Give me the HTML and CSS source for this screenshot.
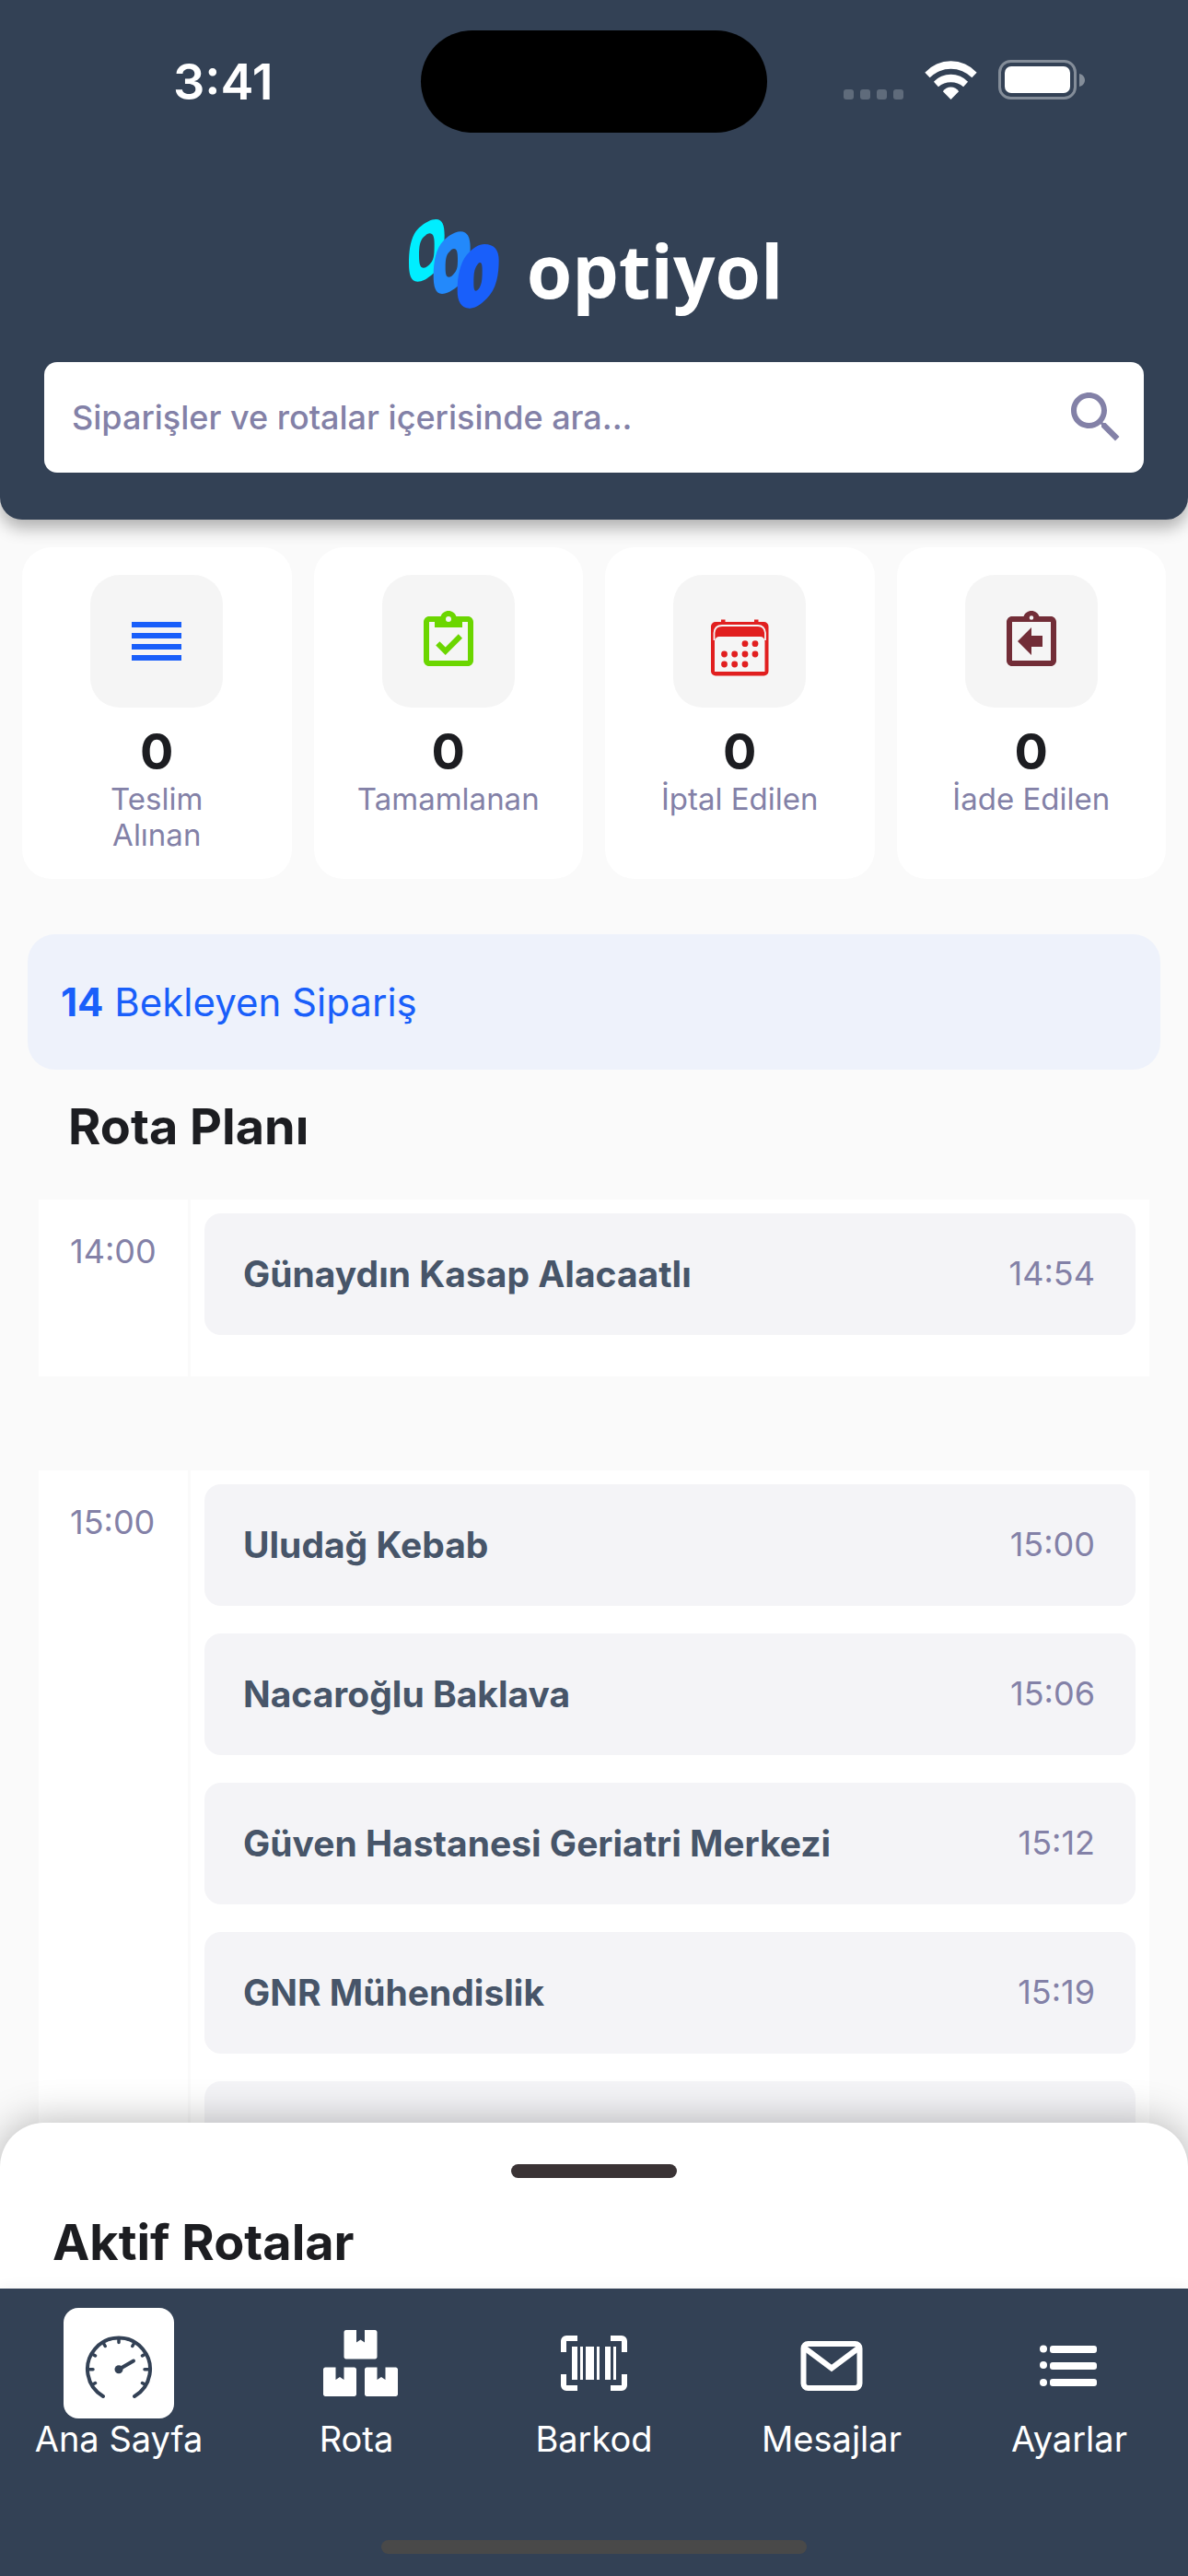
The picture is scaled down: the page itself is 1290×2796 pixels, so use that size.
FILE: index.html
```html
<!DOCTYPE html>
<html lang="tr">
  <head>
    <meta charset="UTF-8" />
    <meta name="viewport" content="width=device-width, initial-scale=1.0" />
    <title>optiyol - Ana Sayfa</title>
    <link rel="stylesheet" href="styles.css">
  </head>
  <body>
    <header class="header">
      <div class="statusBar">
        <span class="clock">3:41</span>
        <div class="island"></div>
        <div class="indicators">
          <svg width="65" height="11" fill="#5f6b7b">
            <rect width="11" height="11" rx="3" />
            <rect x="18" width="11" height="11" rx="3" />
            <rect x="36" width="11" height="11" rx="3" />
            <rect x="54" width="11" height="11" rx="3" />
          </svg>
          <svg width="57" height="42" viewBox="0 0 172 126" fill="#fff">
            <path d="M1 38A115 115 0 0 1 171 38L155 55A97 97 0 0 0 17 55Z" />
            <path d="M30 68A77 77 0 0 1 142 68L127 85A64 64 0 0 0 45 85Z" />
            <path d="M60 100A31 31 0 0 1 112 100L86 126Z" />
          </svg>
          <svg width="94" height="43">
            <rect x="1.5" y="1.5" width="82" height="40" rx="12" fill="none" stroke="#848d99" stroke-width="3" />
            <rect x="7" y="7" width="71" height="29" rx="7" fill="#fff" />
            <path d="M88 15c4 1 6 4 6 7s-2 6-6 7z" fill="#848d99" />
          </svg>
        </div>
      </div>
      <div class="brand">
        <svg width="98" height="97" viewBox="72 52 294 291" fill-rule="evenodd">
          <path fill="#00eeff" d="M160 52C182 52 188 72 188 105C188 150 178 205 152 228C130 247 115 255 100 255C78 255 72 230 72 195C72 150 78 105 105 80C125 62 145 52 160 52ZM140 98C152 98 155 112 155 132C155 165 154 180 145 192C135 204 128 210 118 210C108 210 105 195 105 170C105 140 108 122 120 110C127 103 133 98 140 98Z" />
          <path fill="#2389fb" d="M240 92C264 92 272 112 272 145C272 190 262 243 236 266C214 285 196 295 180 295C158 295 152 270 152 235C152 190 160 145 186 120C205 102 225 92 240 92ZM219 148C229 148 231 162 231 180C231 205 230 214 222 225C214 236 208 240 202 240C193 240 191 228 191 210C191 185 193 170 202 160C208 153 213 148 219 148Z" />
          <path fill="#195ffa" d="M318 133C350 133 365 152 365 185C365 230 358 280 325 311C308 328 290 342 272 342C242 342 230 318 230 285C230 238 238 195 262 166C280 145 300 133 318 133ZM304 193C310 193 311 205 311 220C311 240 310 256 306 266C302 278 295 285 290 285C284 285 283 274 283 258C283 236 284 220 290 208C295 199 299 193 304 193Z" />
        </svg>
        <span class="brandName">optiyol</span>
      </div>
      <form class="search">
        <input type="text" name="search" id="search" aria-label="Ara" placeholder="Siparişler ve rotalar içerisinde ara..." />
        <button type="button" aria-label="Ara">
          <svg width="72" height="72" viewBox="0 0 24 24" fill="#8381a7">
            <path d="M15.5 14h-.79l-.28-.27C15.41 12.59 16 11.11 16 9.5 16 5.91 13.09 3 9.5 3S3 5.91 3 9.5 5.91 16 9.5 16c1.61 0 3.09-.59 4.23-1.57l.27.28v.79l5 4.99L20.49 19l-4.99-5zm-6 0C7.01 14 5 11.99 5 9.5S7.01 5 9.5 5 14 7.01 14 9.5 11.99 14 9.5 14z" />
          </svg>
        </button>
      </form>
    </header>

    <main class="content">
      <section class="stats">
        <div class="stat">
          <div class="statIcon">
            <svg viewBox="0 0 24 24" fill="#195ffa">
              <path d="M3 5h18v2H3zM3 9h18v2H3zM3 13h18v2H3zM3 17h18v2H3z" />
            </svg>
          </div>
          <strong>0</strong>
          <span>Teslim Alınan</span>
        </div>
        <div class="stat">
          <div class="statIcon">
            <svg viewBox="0 0 24 24" fill="#6bd600" fill-rule="evenodd">
              <path d="M19 3h-4.180C14.400 1.840 13.300 1 12 1s-2.400.840-2.820 2H5c-1.100 0-2 .900-2 2v14c0 1.100.900 2 2 2h14c1.100 0 2-.900 2-2V5c0-1.100-.900-2-2-2zM12 3a1 1 0 1 1 0 2 1 1 0 0 1 0-2zM19 19H5V5h2v2h10V5h2z" />
              <path d="M8.800 12.100L10.900 14.200L15.600 9.400L17 10.900L10.900 17L7.400 13.500Z" />
            </svg>
          </div>
          <strong>0</strong>
          <span>Tamamlanan</span>
        </div>
        <div class="stat">
          <div class="statIcon">
            <svg viewBox="0 0 72 72" fill="#e11f1f">
              <path fill-rule="evenodd" d="M10 15h52.500a5 5 0 0 1 5 5v48.500a5 5 0 0 1-5 5H10a5 5 0 0 1-5-5V20a5 5 0 0 1 5-5zM14 31a5 5 0 0 0-5 5v33h54.500V36a5 5 0 0 0-5-5z" />
              <path d="M16 12.500h4.500V16H16zM52 12.500h4.500V16H52z" />
              <path d="M8.500 35V27Q9 19 17 19H56Q63 19 64 27V35" fill="none" stroke="#f5f5f5" stroke-width="1.800" />
              <circle cx="42" cy="38.700" r="3.400" />
              <circle cx="53" cy="38.700" r="3.400" />
              <circle cx="19.500" cy="50" r="3.400" />
              <circle cx="30.700" cy="50" r="3.400" />
              <circle cx="42" cy="50" r="3.400" />
              <circle cx="53" cy="50" r="3.400" />
              <circle cx="19.500" cy="61" r="3.400" />
              <circle cx="30.700" cy="61" r="3.400" />
              <circle cx="42" cy="61" r="3.400" />
            </svg>
          </div>
          <strong>0</strong>
          <span>İptal Edilen</span>
        </div>
        <div class="stat">
          <div class="statIcon">
            <svg viewBox="0 0 24 24" fill="#722d37" fill-rule="evenodd">
              <path d="M19 3h-4.180C14.400 1.840 13.300 1 12 1s-2.400.840-2.820 2H5c-1.100 0-2 .900-2 2v14c0 1.100.900 2 2 2h14c1.100 0 2-.900 2-2V5c0-1.100-.900-2-2-2zM12 2.750a.750.750 0 1 1 0 1.500.750.750 0 0 1 0-1.500zM19 19H5V5h14z" />
              <path d="M12 17l-5-5 5-5v3h4v4h-4z" />
            </svg>
          </div>
          <strong>0</strong>
          <span>İade Edilen</span>
        </div>
      </section>

      <div class="pending"><b>14</b> Bekleyen Sipariş</div>

      <h2 class="planTitle">Rota Planı</h2>
      <section class="slot">
        <div class="slotHour">14:00</div>
        <div class="slotStops">
          <div class="stop"><b>Günaydın Kasap Alacaatlı</b><span>14:54</span></div>
        </div>
      </section>
      <section class="slot">
        <div class="slotHour">15:00</div>
        <div class="slotStops">
          <div class="stop"><b>Uludağ Kebab</b><span>15:00</span></div>
          <div class="stop"><b>Nacaroğlu Baklava</b><span>15:06</span></div>
          <div class="stop"><b>Güven Hastanesi Geriatri Merkezi</b><span>15:12</span></div>
          <div class="stop"><b>GNR Mühendislik</b><span>15:19</span></div>
          <div class="stop"></div>
        </div>
      </section>
    </main>

    <section class="sheet">
      <div class="handle"></div>
      <h2>Aktif Rotalar</h2>
    </section>

    <footer class="bottom">
      <nav class="tabs">
        <a href="#" class="tab active">
          <span class="tabIcon">
            <svg viewBox="0 0 72 72" fill="none" stroke="#334155" stroke-width="4" stroke-linecap="round">
              <path d="M19 72A34 34 0 1 1 53 72" />
              <path stroke-width="3.500" d="M36 9.500v4M19.200 14l2 3.500M52.800 14l-2 3.500M7 26l3.500 2M65 26l-3.500 2M3 42.700h5M69 42.700h-5M7 59.500l3.500-2M65 59.500l-3.500-2" />
              <path d="M36 42.700L52 33.500" />
              <circle cx="36" cy="42.700" r="4.500" fill="#334155" stroke="none" />
            </svg>
          </span>
          Ana Sayfa
        </a>
        <a href="#" class="tab">
          <span class="tabIcon">
            <svg viewBox="0 0 512 512" fill="#fff">
              <path d="M560 288h-80v96l-32-21.300-32 21.300v-96h-80c-8.800 0-16 7.200-16 16v192c0 8.800 7.200 16 16 16h224c8.800 0 16-7.200 16-16V304c0-8.800-7.200-16-16-16zm-384-64h224c8.800 0 16-7.200 16-16V16c0-8.800-7.200-16-16-16h-80v96l-32-21.300L256 96V0h-80c-8.800 0-16 7.200-16 16v192c0 8.800 7.200 16 16 16zm64 64h-80v96l-32-21.300L96 384v-96H16c-8.800 0-16 7.200-16 16v192c0 8.800 7.200 16 16 16h224c8.800 0 16-7.200 16-16V304c0-8.800-7.200-16-16-16z" />
            </svg>
          </span>
          Rota
        </a>
        <a href="#" class="tab">
          <span class="tabIcon">
            <svg viewBox="0 0 72 72" fill="#fff">
              <path d="M3 24V12a3 3 0 0 1 3-3H18M54 9H66a3 3 0 0 1 3 3V24M69 48V60a3 3 0 0 1-3 3H54M18 63H6a3 3 0 0 1-3-3V48" fill="none" stroke="#fff" stroke-width="6" />
              <path d="M12 18h6v36h-6zM21 18h3v36h-3zM27 18h9v36h-9zM39 18h3v36h-3zM48 18h6v36h-6zM57 18h3v36h-3z" />
            </svg>
          </span>
          Barkod
        </a>
        <a href="#" class="tab">
          <span class="tabIcon">
            <svg viewBox="0 0 72 72" fill="none" stroke="#fff" stroke-width="6">
              <rect x="5.500" y="15" width="61" height="48" rx="5" />
              <path d="M6 19L36 41.500L66 19" />
            </svg>
          </span>
          Mesajlar
        </a>
        <a href="#" class="tab">
          <span class="tabIcon">
            <svg viewBox="0 0 72 72" fill="#fff">
              <circle cx="8" cy="20.500" r="4" />
              <circle cx="8" cy="38" r="4" />
              <circle cx="8" cy="57" r="4" />
              <rect x="15" y="17" width="51" height="8" rx="3" />
              <rect x="15" y="35" width="51" height="8" rx="3" />
              <rect x="15" y="53" width="51" height="8" rx="3" />
            </svg>
          </span>
          Ayarlar
        </a>
      </nav>
      <div class="homeBar"></div>
    </footer>
  </body>
</html>
```

FILE: styles.css
```css
* {
  box-sizing: border-box;
}
body {
  margin: 0;
  height: 100vh;
  display: flex;
  flex-direction: column;
  overflow: hidden;
  background-color: #fafafa;
  color: #1c1d21;
  font-family: "Inter", "Liberation Sans", sans-serif;
}
svg {
  display: block;
  overflow: visible;
}
h2 {
  margin: 0;
  font-weight: 700;
  font-size: 54px;
  line-height: 64px;
}

/* header */
.header {
  position: relative;
  z-index: 1;
  flex-shrink: 0;
  padding: 33px 48px 51px;
  background-color: #334155;
  border-radius: 0 0 24px 24px;
  box-shadow: 0 9px 18px rgba(0, 0, 0, 0.3);
}
.statusBar {
  display: grid;
  grid-template-columns: 1fr auto 1fr;
  align-items: center;
}
.clock {
  padding-left: 140px;
  color: white;
  font-size: 54px;
  font-weight: 600;
}
.island {
  width: 376px;
  height: 111px;
  border-radius: 56px;
  background-color: black;
}
.indicators {
  display: flex;
  justify-content: flex-end;
  align-items: flex-end;
  gap: 23px;
  padding: 0 64px 4px 0;
}
.brand {
  display: flex;
  justify-content: center;
  gap: 30px;
  margin: 94px 0 58px;
  padding-left: 4px;
}
.brandName {
  padding-top: 12px;
  color: white;
  font-family: "Open Sans", sans-serif;
  font-size: 80px;
  font-weight: 700;
  line-height: 85px;
}
.search {
  display: flex;
  align-items: center;
  height: 120px;
  padding: 0 16px 0 30px;
  border-radius: 14px;
  background-color: white;
}
.search input {
  flex-grow: 1;
  min-width: 0;
  padding: 0;
  border: none;
  outline: none;
  background: none;
  font-family: inherit;
  font-size: 36px;
  font-weight: 500;
}
.search input::placeholder {
  color: #8381a7;
  opacity: 1;
}
.search button {
  padding: 0;
  border: none;
  background: none;
}

/* dashboard */
.content {
  flex: 1;
  min-height: 0;
  overflow: hidden;
}
.stats {
  display: grid;
  grid-template-columns: repeat(4, 1fr);
  gap: 24px;
  padding: 30px 24px 0;
}
.stat {
  display: flex;
  flex-direction: column;
  align-items: center;
  min-height: 360px;
  padding: 30px 46px 26px;
  border-radius: 32px;
  background-color: white;
  text-align: center;
}
.statIcon {
  display: flex;
  align-items: center;
  justify-content: center;
  width: 144px;
  height: 144px;
  margin-bottom: 18px;
  border-radius: 32px;
  background-color: #f5f5f5;
}
.statIcon svg,
.tabIcon svg {
  width: 72px;
  height: 72px;
}
.stat strong {
  font-size: 54px;
  font-weight: 700;
  line-height: 60px;
}
.stat span {
  margin-top: 2px;
  color: #8381a7;
  font-size: 33px;
  line-height: 39px;
}
.pending {
  margin: 60px 30px 30px;
  padding: 0 36px;
  border-radius: 30px;
  background-color: #eef2fb;
  color: #195ffa;
  font-size: 42px;
  line-height: 147px;
}
.planTitle {
  margin: 0 74px 47px;
}

/* route plan */
.slot {
  display: flex;
  margin: 0 42px 102px;
}
.slotHour {
  width: 162px;
  padding: 34px 0 0 34px;
  background-color: white;
  color: #8381a7;
  font-size: 36px;
  line-height: 44px;
}
.slotStops {
  flex: 1;
  display: flex;
  flex-direction: column;
  gap: 30px;
  margin-left: 3px;
  padding: 15px 15px 45px;
  background-color: white;
}
.stop {
  display: flex;
  align-items: center;
  justify-content: space-between;
  height: 132px;
  padding: 0 44px 2px 42px;
  border-radius: 18px;
  background-color: #f4f4f7;
}
.stop b {
  color: #475569;
  font-size: 39px;
  font-weight: 700;
}
.stop span {
  color: #8381a7;
  font-size: 36px;
}

/* active routes sheet, slides over the plan */
.sheet {
  position: relative;
  flex-shrink: 0;
  margin-top: -48px;
  padding: 45px 57px 18px;
  border-radius: 48px 48px 0 0;
  background-color: white;
  box-shadow: 0 0 45px rgba(0, 0, 0, 0.3);
}
.handle {
  width: 180px;
  height: 15px;
  margin: 0 auto 38px;
  border-radius: 8px;
  background-color: #3a3335;
}

/* bottom navigation */
.bottom {
  position: relative;
  flex-shrink: 0;
  padding: 21px 0 24px;
  background-color: #334155;
  box-shadow: 0 0 15px rgba(0, 0, 0, 0.06);
}
.tabs {
  display: flex;
}
.tab {
  flex: 1;
  display: flex;
  flex-direction: column;
  align-items: center;
  color: white;
  font-size: 38px;
  line-height: 44px;
  text-decoration: none;
}
.tabIcon {
  display: flex;
  align-items: center;
  justify-content: center;
  width: 120px;
  height: 120px;
  border-radius: 16px;
}
.tab.active .tabIcon {
  background-color: white;
}
.homeBar {
  width: 462px;
  height: 15px;
  margin: 88px auto 0;
  border-radius: 8px;
  background-color: #494949;
}
```
